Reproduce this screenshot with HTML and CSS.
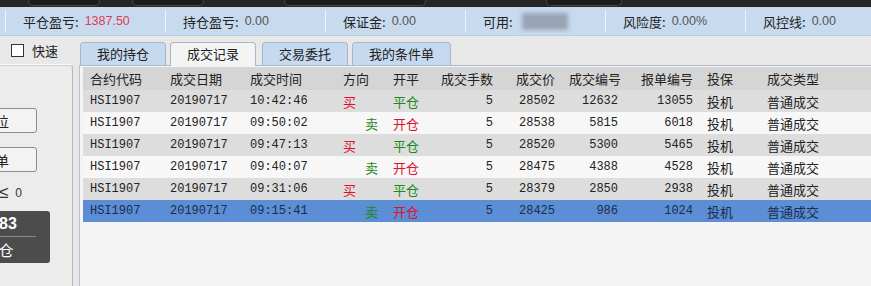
FILE: index.html
```html
<!DOCTYPE html>
<html lang="zh-CN">
<head>
  <meta charset="UTF-8">
  <title>成交记录</title>
  <link rel="stylesheet" href="styles.css">
</head>
<body>
  <div class="topstrip">
    <span class="key k1"></span>
    <span class="key k2"></span>
    <span class="key k3"></span>
    <span class="key k4"></span>
  </div>

  <div class="infobar">
    <div class="seg"><span class="lbl">平仓盈亏:</span><span class="val red">1387.50</span></div>
    <div class="seg"><span class="lbl">持仓盈亏:</span><span class="val">0.00</span></div>
    <div class="seg"><span class="lbl">保证金:</span><span class="val">0.00</span></div>
    <div class="seg"><span class="lbl">可用:</span><span class="blur"></span></div>
    <div class="seg"><span class="lbl">风险度:</span><span class="val">0.00%</span></div>
    <div class="seg"><span class="lbl">风控线:</span><span class="val">0.00</span></div>
  </div>

  <div class="main">
    <div class="side">
      <label class="quick"><span class="box"></span>快速</label>
      <div class="side-panel">
        <button class="side-btn">位</button>
        <button class="side-btn">单</button>
        <div class="limit"><span class="sym">≤</span>0</div>
        <div class="dark-card">
          <div class="num">83</div>
          <div class="rule"></div>
          <div class="act">仓</div>
        </div>
      </div>
    </div>

    <div class="content">
      <div class="tabs">
        <div class="tab">我的持仓</div>
        <div class="tab active">成交记录</div>
        <div class="tab t3">交易委托</div>
        <div class="tab t4">我的条件单</div>
      </div>
      <div class="grid-box">
        <div class="row head">
          <span>合约代码</span><span>成交日期</span><span>成交时间</span><span>方向</span><span>开平</span>
          <span class="r">成交手数</span><span class="r">成交价</span><span class="r">成交编号</span><span class="r">报单编号</span>
          <span>投保</span><span>成交类型</span>
        </div>
        <div class="row odd">
          <span>HSI1907</span><span>20190717</span><span>10:42:46</span><span class="buy">买</span><span class="green">平仓</span>
          <span class="r">5</span><span class="r">28502</span><span class="r">12632</span><span class="r">13055</span>
          <span>投机</span><span>普通成交</span>
        </div>
        <div class="row">
          <span>HSI1907</span><span>20190717</span><span>09:50:02</span><span class="sell">卖</span><span class="red">开仓</span>
          <span class="r">5</span><span class="r">28538</span><span class="r">5815</span><span class="r">6018</span>
          <span>投机</span><span>普通成交</span>
        </div>
        <div class="row odd">
          <span>HSI1907</span><span>20190717</span><span>09:47:13</span><span class="buy">买</span><span class="green">平仓</span>
          <span class="r">5</span><span class="r">28520</span><span class="r">5300</span><span class="r">5465</span>
          <span>投机</span><span>普通成交</span>
        </div>
        <div class="row">
          <span>HSI1907</span><span>20190717</span><span>09:40:07</span><span class="sell">卖</span><span class="red">开仓</span>
          <span class="r">5</span><span class="r">28475</span><span class="r">4388</span><span class="r">4528</span>
          <span>投机</span><span>普通成交</span>
        </div>
        <div class="row odd">
          <span>HSI1907</span><span>20190717</span><span>09:31:06</span><span class="buy">买</span><span class="green">平仓</span>
          <span class="r">5</span><span class="r">28379</span><span class="r">2850</span><span class="r">2938</span>
          <span>投机</span><span>普通成交</span>
        </div>
        <div class="row selected">
          <span>HSI1907</span><span>20190717</span><span>09:15:41</span><span class="sell">卖</span><span class="red">开仓</span>
          <span class="r">5</span><span class="r">28425</span><span class="r">986</span><span class="r">1024</span>
          <span>投机</span><span>普通成交</span>
        </div>
      </div>
    </div>
  </div>
</body>
</html>
```

FILE: styles.css
```css
body {
  margin: 0;
  width: 871px;
  height: 286px;
  overflow: hidden;
  background: #e8e8e8;
  font-family: "Noto Sans CJK SC", sans-serif;
  font-size: 13px;
  color: #222;
}

/* dark strip at the very top */
.topstrip {
  height: 7px;
  background: #262626;
  display: flex;
  overflow: hidden;
}

.key {
  height: 5px;
  border: 1px solid #474747;
  border-top: none;
  border-radius: 0 0 5px 5px;
  background: #1c1c1c;
}

.k1 { width: 70px; margin-left: 28px; }
.k2 { width: 70px; margin-left: 32px; }
.k3 { width: 140px; margin-left: 80px; }
.k4 { width: 74px; margin-left: 120px; }

/* account info bar */
.infobar {
  height: 29px;
  background: #c7daee;
  border-bottom: 1px solid #b9cde2;
  box-sizing: border-box;
  display: grid;
  grid-template-columns: 160px 160px 140px 140px 140px 1fr;
  padding-left: 5px;
  align-items: center;
}

.seg {
  height: 22px;
  border-left: 1px solid #eef4fa;
  padding-left: 17px;
  display: flex;
  align-items: center;
  white-space: nowrap;
}

.lbl {
  color: #222;
  margin-right: 6px;
}

.val {
  font-family: "Liberation Sans", sans-serif;
  font-size: 12.5px;
  color: #555;
}

.val.red {
  color: #e23b5a;
}

.blur {
  width: 46px;
  height: 17px;
  margin-left: 3px;
  background: #98a3b4;
  filter: blur(2px);
}

/* main area */
.main {
  display: flex;
  height: 250px;
}

.side {
  width: 73px;
  flex: none;
  overflow: hidden;
}

.quick {
  display: flex;
  align-items: center;
  height: 28px;
  padding-left: 11px;
  font-size: 13px;
}

.quick .box {
  width: 11px;
  height: 11px;
  border: 1px solid #333;
  background: #fff;
  margin-right: 8px;
}

.side-panel {
  height: 222px;
  border-top: 1px solid #fafafa;
  border-right: 1px solid #b8b8b8;
  border-top-right-radius: 4px;
  box-shadow: inset 0 1px 0 #cfcfcf;
  background: #ececec;
}

.side-btn {
  display: block;
  width: 70px;
  height: 25px;
  margin-left: -33px;
  border: 1px solid #8c8c8c;
  border-radius: 3px;
  background: #f3f3f3;
  font-family: "Noto Sans CJK SC", sans-serif;
  font-size: 14px;
  color: #222;
  padding: 0;
}

.side-btn:first-child {
  margin-top: 43px;
}

.side-btn + .side-btn {
  margin-top: 14px;
}

.limit {
  margin-top: 11px;
  height: 20px;
  font-family: "Liberation Sans", sans-serif;
  font-size: 12px;
  color: #333;
  display: flex;
  align-items: center;
  margin-left: -1px;
}

.limit .sym {
  font-size: 17px;
  margin-right: 7px;
}

.dark-card {
  margin-top: 8px;
  width: 80px;
  height: 52px;
  margin-left: -30px;
  background: #4c4c4c;
  border-radius: 3px;
  color: #fff;
  text-align: center;
}

.dark-card .num {
  font-family: "Liberation Sans", sans-serif;
  font-weight: bold;
  font-size: 16px;
  line-height: 25px;
  padding-right: 4px;
}

.dark-card .rule {
  width: 66px;
  height: 1px;
  background: #8a8a8a;
}

.dark-card .act {
  font-size: 15px;
  line-height: 25px;
  padding-right: 8px;
}

/* tabs and trade grid */
.content {
  flex: 1;
  margin-left: 6px;
  display: flex;
  flex-direction: column;
}

.tabs {
  height: 29px;
  display: flex;
  align-items: flex-end;
  padding-left: 1px;
  gap: 4px;
}

.tab {
  width: 84px;
  height: 22px;
  line-height: 22px;
  text-align: center;
  background: #c6d9ef;
  border: 1px solid #a4b7cc;
  border-bottom: none;
  border-radius: 4px 4px 0 0;
}

.tab.active {
  background: #f4f4f4;
  height: 23px;
  margin-bottom: -1px;
  position: relative;
}

.tab.t3 {
  margin-left: 2px;
}

.tab.t4 {
  width: 97px;
}

.grid-box {
  flex: 1;
  border-top: 1px solid #a9bbce;
  border-left: 1px solid #b3c3d4;
  background: #f4f4f4;
  padding: 1px 0 0 3px;
  font-family: "Liberation Mono", "Noto Sans CJK SC", monospace;
  font-size: 12px;
}

.row {
  display: grid;
  grid-template-columns: 80px 80px 93px 50px 47px 67px 62px 63px 75px 60px 1fr;
  height: 22px;
  align-items: center;
  background: #f7f7f7;
  color: #222;
  white-space: nowrap;
}

.row span {
  padding: 0 7px;
}

.row .r {
  text-align: right;
}

.row.head {
  height: 23px;
  background: #d5d5d5;
  font-family: "Noto Sans CJK SC", sans-serif;
  font-size: 13px;
}

.row.odd {
  background: #dddddd;
}

.row.selected {
  background: #5b8ed4;
  color: #1c2c4e;
}

.buy {
  font-family: "Noto Sans CJK SC", sans-serif;
  font-size: 13px;
  color: #e0102a;
}

.sell {
  font-family: "Noto Sans CJK SC", sans-serif;
  font-size: 13px;
  color: #1a8a1a;
  padding-left: 29px !important;
}

.row .red,
.row .green {
  font-family: "Noto Sans CJK SC", sans-serif;
  font-size: 13px;
}

.row .red { color: #e0102a; }
.row .green { color: #1a8a1a; }

.row span:nth-child(10),
.row span:nth-child(11) {
  font-family: "Noto Sans CJK SC", sans-serif;
  font-size: 13px;
}
```
